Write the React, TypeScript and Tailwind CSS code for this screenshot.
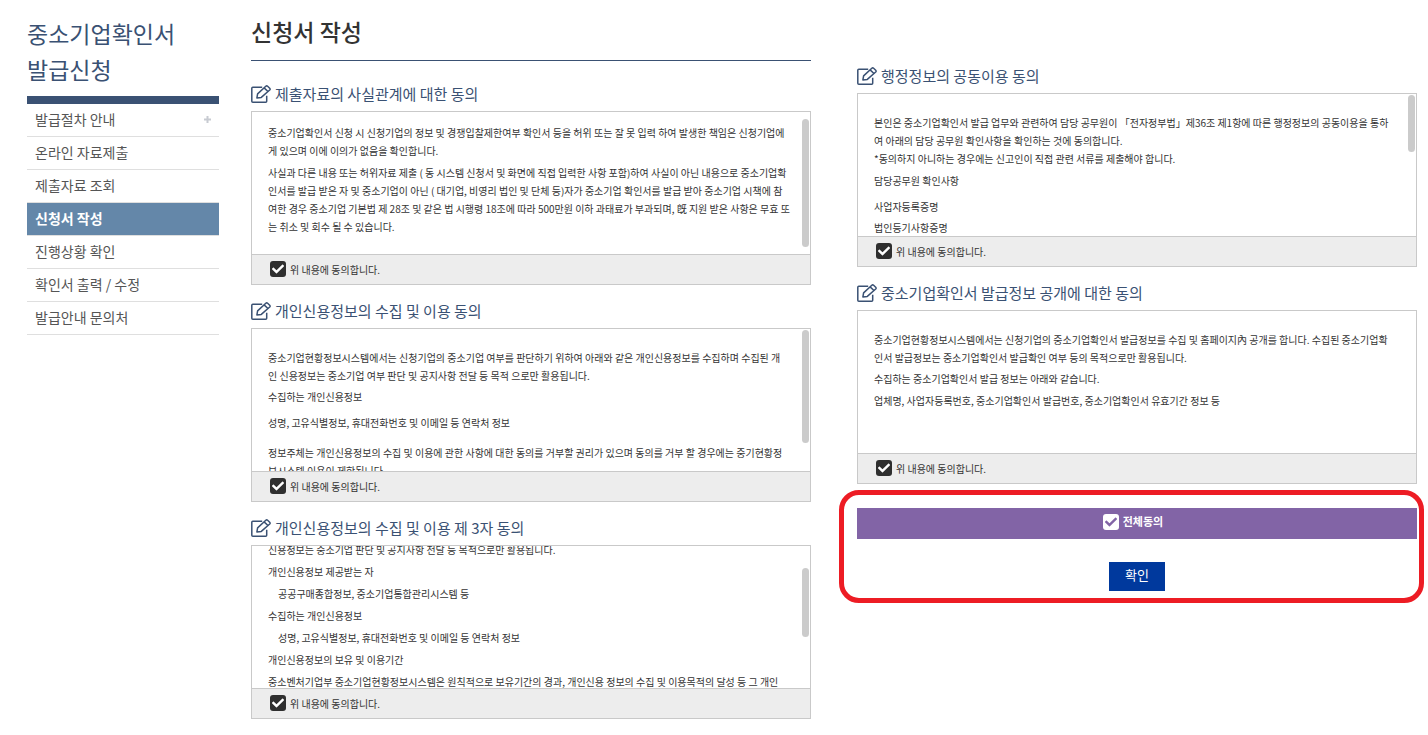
import React, { useState } from 'react';
import { FaCheck } from 'react-icons/fa';

interface Paragraph {
  lines: string[];
  className?: string;
}

interface Agreement {
  id: string;
  title: string;
  bodyClass: string;
  thumbClass?: string;
  paragraphs: Paragraph[];
}

const menu = [
  { label: '발급절차 안내', expandable: true },
  { label: '온라인 자료제출' },
  { label: '제출자료 조회' },
  { label: '신청서 작성', active: true },
  { label: '진행상황 확인' },
  { label: '확인서 출력 / 수정' },
  { label: '발급안내 문의처' },
];

const leftAgreements: Agreement[] = [
  {
    id: 'fact',
    title: '제출자료의 사실관계에 대한 동의',
    bodyClass: 'pt-3',
    thumbClass: 'top-[7px] h-32',
    paragraphs: [
      {
        lines: [
          '중소기업확인서 신청 시 신청기업의 정보 및 경쟁입찰제한여부 확인서 등을 허위 또는 잘 못 입력 하여 발생한 책임은 신청기업에',
          '게 있으며 이에 이의가 없음을 확인합니다.',
        ],
      },
      {
        lines: [
          '사실과 다른 내용 또는 허위자료 제출 ( 동 시스템 신청서 및 화면에 직접 입력한 사항 포함)하여 사실이 아닌 내용으로 중소기업확',
          '인서를 발급 받은 자 및 중소기업이 아닌 ( 대기업, 비영리 법인 및 단체 등)자가 중소기업 확인서를 발급 받아 중소기업 시책에 참',
          '여한 경우 중소기업 기본법 제 28조 및 같은 법 시행령 18조에 따라 500만원 이하 과태료가 부과되며, 旣 지원 받은 사항은 무효 또',
          '는 취소 및 회수 될 수 있습니다.',
        ],
        className: 'mt-1',
      },
    ],
  },
  {
    id: 'credit',
    title: '개인신용정보의 수집 및 이용 동의',
    bodyClass: 'pt-5',
    thumbClass: 'top-px h-[113px]',
    paragraphs: [
      {
        lines: [
          '중소기업현황정보시스템에서는 신청기업의 중소기업 여부를 판단하기 위하여 아래와 같은 개인신용정보를 수집하며 수집된 개',
          '인 신용정보는 중소기업 여부 판단 및 공지사항 전달 등 목적 으로만 활용됩니다.',
        ],
      },
      { lines: ['수집하는 개인신용정보'], className: 'mt-[3px]' },
      { lines: ['성명, 고유식별정보, 휴대전화번호 및 이메일 등 연락처 정보'], className: 'mt-2' },
      {
        lines: [
          '정보주체는 개인신용정보의 수집 및 이용에 관한 사항에 대한 동의를 거부할 권리가 있으며 동의를 거부 할 경우에는 중기현황정',
          '보시스템 이용이 제한됩니다.',
        ],
        className: 'mt-3',
      },
    ],
  },
  {
    id: 'third-party',
    title: '개인신용정보의 수집 및 이용 제 3자 동의',
    bodyClass: 'justify-center pb-0.5',
    thumbClass: 'top-[22px] h-[69px]',
    paragraphs: [
      { lines: ['신용정보는 중소기업 판단 및 공지사항 전달 등 목적으로만 활용됩니다.'] },
      { lines: ['개인신용정보 제공받는 자'], className: 'mt-1' },
      { lines: ['공공구매종합정보, 중소기업통합관리시스템 등'], className: 'mt-1 pl-2.5' },
      { lines: ['수집하는 개인신용정보'], className: 'mt-1' },
      { lines: ['성명, 고유식별정보, 휴대전화번호 및 이메일 등 연락처 정보'], className: 'mt-1 pl-2.5' },
      { lines: ['개인신용정보의 보유 및 이용기간'], className: 'mt-1' },
      {
        lines: ['중소벤처기업부 중소기업현황정보시스템은 원칙적으로 보유기간의 경과, 개인신용 정보의 수집 및 이용목적의 달성 등 그 개인'],
        className: 'mt-1',
      },
    ],
  },
];

const rightAgreements: Agreement[] = [
  {
    id: 'admin',
    title: '행정정보의 공동이용 동의',
    bodyClass: 'pt-5',
    thumbClass: 'top-px h-[57px]',
    paragraphs: [
      {
        lines: [
          '본인은 중소기업확인서 발급 업무와 관련하여 담당 공무원이 「전자정부법」제36조 제1항에 따른 행정정보의 공동이용을 통하',
          '여 아래의 담당 공무원 확인사항을 확인하는 것에 동의합니다.',
          '*동의하지 아니하는 경우에는 신고인이 직접 관련 서류를 제출해야 합니다.',
        ],
      },
      { lines: ['담당공무원 확인사항'], className: 'mt-1' },
      { lines: ['사업자등록증명'], className: 'mt-2' },
      { lines: ['법인등기사항증명'], className: 'mt-[3px]' },
    ],
  },
  {
    id: 'disclosure',
    title: '중소기업확인서 발급정보 공개에 대한 동의',
    bodyClass: 'pt-5',
    paragraphs: [
      {
        lines: [
          '중소기업현황정보시스템에서는 신청기업의 중소기업확인서 발급정보를 수집 및 홈페이지內 공개를 합니다. 수집된 중소기업확',
          '인서 발급정보는 중소기업확인서 발급확인 여부 등의 목적으로만 활용됩니다.',
        ],
      },
      { lines: ['수집하는 중소기업확인서 발급 정보는 아래와 같습니다.'], className: 'mt-[3px]' },
      { lines: ['업체명, 사업자등록번호, 중소기업확인서 발급번호, 중소기업확인서 유효기간 정보 등'], className: 'mt-1' },
    ],
  },
];

const allIds = [...leftAgreements, ...rightAgreements].map(a => a.id);

function EditIcon() {
  return (
    <svg
      viewBox="0 0 20 18"
      className="h-[18px] w-5 shrink-0"
      fill="none"
      stroke="currentColor"
      strokeWidth="1.5"
      strokeLinejoin="round"
      aria-hidden="true"
    >
      <path d="M11.2 2.3H1.8q-1 0-1 1v12.9q0 1 1 1h12.9q1 0 1-1v-5.4" />
      <path d="M5.9 12.9l.7-4L14.8 1.3q.9-.8 1.8 0l2.1 2q.8.9 0 1.7l-8.4 7.4z" />
      <path d="M13.1 2.9l3.9 3.6" />
    </svg>
  );
}

interface TickBoxProps {
  checked: boolean;
  onChange: () => void;
  light?: boolean;
}

function TickBox({ checked, onChange, light }: TickBoxProps) {
  return (
    <span className="relative flex size-4 shrink-0">
      <input
        type="checkbox"
        checked={checked}
        onChange={onChange}
        className={`size-4 appearance-none rounded-[3px] ${light ? 'bg-white' : 'bg-[#2f2f2f]'}`}
      />
      {checked && (
        <FaCheck
          className={`pointer-events-none absolute inset-0 m-auto size-3 ${light ? 'text-[#8264a6]' : 'text-white'}`}
        />
      )}
    </span>
  );
}

interface AgreementCardProps {
  item: Agreement;
  checked: boolean;
  onToggle: () => void;
}

function AgreementCard({ item, checked, onToggle }: AgreementCardProps) {
  return (
    <section>
      <h3 className="flex h-8 items-center gap-1 pb-0.5 text-[15px] text-[#3a5173]">
        <EditIcon />
        {item.title}
      </h3>
      <div className="border border-[#c9c9c9]">
        <div className="relative">
          <div className={`flex h-[142px] flex-col overflow-hidden px-4 text-[10px] leading-[18px] whitespace-nowrap ${item.bodyClass}`}>
            {item.paragraphs.map(p => (
              <p key={p.lines[0]} className={`shrink-0 ${p.className ?? ''}`}>
                {p.lines.map(line => (
                  <span key={line} className="block">{line}</span>
                ))}
              </p>
            ))}
          </div>
          {item.thumbClass && (
            <div className={`absolute right-px w-[7px] rounded-full bg-[#cbcbcb] ${item.thumbClass}`} />
          )}
        </div>
        <label className="flex h-[30px] items-center gap-1 border-t border-[#c9c9c9] bg-[#ededed] pb-px pl-[18px] text-[10px]">
          <TickBox checked={checked} onChange={onToggle} />
          위 내용에 동의합니다.
        </label>
      </div>
    </section>
  );
}

export default function App() {
  const [agreed, setAgreed] = useState<string[]>(allIds);
  const allAgreed = agreed.length === allIds.length;

  const toggle = (id: string) =>
    setAgreed(prev => (prev.includes(id) ? prev.filter(v => v !== id) : [...prev, id]));

  const renderCards = (items: Agreement[]) =>
    items.map(item => (
      <AgreementCard key={item.id} item={item} checked={agreed.includes(item.id)} onToggle={() => toggle(item.id)} />
    ));

  return (
    <div className="flex items-start bg-white pr-[11px] pb-4 pl-[27px] font-['Noto_Sans_CJK_KR',sans-serif] text-[#333333]">
      {/* 좌측 메뉴 */}
      <aside className="w-48 shrink-0 pt-[15px]">
        <h2 className="h-[81px] text-[23px] leading-9 text-[#3a5173]">
          중소기업확인서
          <br />
          발급신청
        </h2>
        <nav className="border-t-8 border-[#3a5173]">
          <ul>
            {menu.map(item => (
              <li key={item.label} className="border-b border-[#dfdfdf]">
                <a
                  href="#"
                  className={`flex h-8 items-center justify-between px-2 pb-0.5 text-sm ${
                    item.active ? 'bg-[#6487a9] font-bold text-white' : 'text-[#555555]'
                  }`}
                >
                  {item.label}
                  {item.expandable && (
                    <svg viewBox="0 0 7 7" className="size-[7px]" fill="#c8cbd2" aria-hidden="true">
                      <path d="M2.5 0h2v2.5H7v2H4.5V7h-2V4.5H0v-2h2.5z" />
                    </svg>
                  )}
                </a>
              </li>
            ))}
          </ul>
        </nav>
      </aside>

      <main className="ml-8 flex min-w-0 flex-1 items-start gap-[46px]">
        <div className="min-w-0 flex-1">
          <h1 className="flex h-[61px] items-center border-b border-[#3a5173] pt-0.5 text-[23px] font-medium">
            신청서 작성
          </h1>
          <div className="flex flex-col gap-[11px] pt-[18px]">{renderCards(leftAgreements)}</div>
        </div>

        <div className="min-w-0 flex-1 pt-[61px]">
          <div className="flex flex-col gap-[11px]">{renderCards(rightAgreements)}</div>

          {/* 전체동의 */}
          <div className="relative mt-6 flex flex-col items-center gap-[23px]">
            <label className="flex h-[31px] w-full items-center justify-center gap-1 bg-[#8264a6] pr-2 pb-1 text-[11px] font-bold text-white">
              <TickBox light checked={allAgreed} onChange={() => setAgreed(allAgreed ? [] : allIds)} />
              전체동의
            </label>
            <button type="button" className="h-[29px] w-14 bg-[#00399d] pb-1 text-[13px] text-white">
              확인
            </button>
            <div className="pointer-events-none absolute -top-[18px] -right-[7px] -bottom-3 -left-[18px] rounded-[20px] border-[5px] border-[#ed1c24]" />
          </div>
        </div>
      </main>
    </div>
  );
}
